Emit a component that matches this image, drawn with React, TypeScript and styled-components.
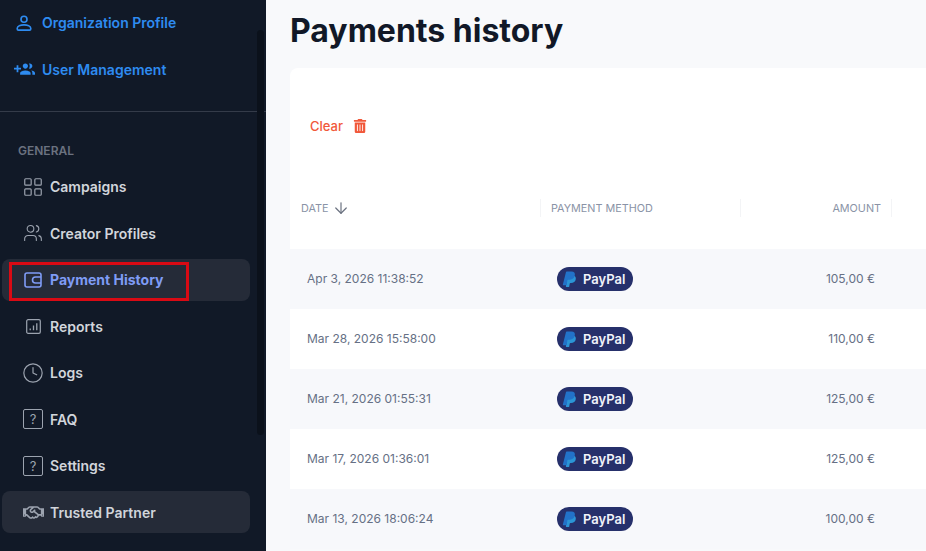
import type { ReactNode } from "react";
import styled, { createGlobalStyle } from "styled-components";
import { ArrowDown, Clock, LayoutGrid, Users } from "lucide-react";
import { FaRegHandshake, FaTrashAlt } from "react-icons/fa";

type NavTone = "default" | "active" | "partner";

interface NavEntry {
  label: string;
  icon: ReactNode;
  tone?: NavTone;
}

interface Payment {
  date: string;
  amount: string;
}

const ProfileIcon = () => (
  <svg width="18" height="18" viewBox="0 0 24 24" fill="none" stroke="currentColor" strokeWidth="2.2">
    <circle cx="12" cy="7" r="4" />
    <path d="M3 20v-1c0-2.8 4.5-4.5 9-4.5s9 1.7 9 4.5v1a1.5 1.5 0 0 1-1.5 1.5h-15A1.5 1.5 0 0 1 3 20z" />
  </svg>
);

const GroupAddIcon = () => (
  <svg width="21" height="21" viewBox="0 0 24 24" fill="currentColor">
    <path d="M8 10H5V7H3v3H0v2h3v3h2v-3h3v-2zm10 1c1.66 0 2.99-1.34 2.99-3S19.66 5 18 5c-.32 0-.63.05-.91.14.57.81.9 1.79.9 2.86s-.34 2.04-.9 2.86c.28.09.59.14.91.14zm-5 0c1.66 0 2.99-1.34 2.99-3S14.66 5 13 5s-3 1.34-3 3 1.34 3 3 3zm6.62 2.16c.83.73 1.38 1.66 1.38 2.84v2h3v-2c0-1.54-2.37-2.49-4.38-2.84zM13 13c-2 0-6 1-6 3v2h12v-2c0-2-4-3-6-3z" />
  </svg>
);

const WalletIcon = () => (
  <svg width="18" height="16" viewBox="0 0 18 16" fill="none" stroke="currentColor" strokeWidth="1.6">
    <rect x="1" y="1" width="16" height="14" rx="2" />
    <path d="M17 5h-5.5a3 3 0 0 0 0 6H17" />
  </svg>
);

const ReportsIcon = () => (
  <svg width="15" height="15" viewBox="0 0 16 16" fill="none" stroke="currentColor">
    <rect x="0.75" y="0.75" width="14.5" height="14.5" rx="1.5" strokeWidth="1.3" />
    <path d="M4.5 12v-2M8 12V7M11.5 12V4.5" strokeWidth="1.4" />
  </svg>
);

const HelpIcon = () => <QuestionBox>?</QuestionBox>;

const PayPalIcon = () => (
  <svg width="15" height="17" viewBox="0 0 24 26">
    <path
      fill="#2b95d6"
      d="M20 7.5c1.6 1 2.4 2.7 2 5-.7 4-3.6 6-7.6 6h-1c-.5 0-.9.3-1 .8l-.9 5.2c-.1.3-.3.5-.6.5H6.8c-.4 0-.6-.3-.6-.7L9 7.5z"
    />
    <path
      fill="#2272c9"
      d="M7.5 0h7.8c3.8 0 6.1 2 5.2 6.3-.8 4.7-3.9 7-8 7H9.6c-.5 0-.9.3-1 .8l-1.2 7.4c-.1.3-.3.5-.6.5H1.9c-.4 0-.6-.3-.6-.7L6.4.9C6.5.4 7 0 7.5 0z"
    />
  </svg>
);

const topEntries: NavEntry[] = [
  { label: "Organization Profile", icon: <ProfileIcon /> },
  { label: "User Management", icon: <GroupAddIcon /> },
];

const generalEntries: NavEntry[] = [
  { label: "Campaigns", icon: <LayoutGrid size={22} strokeWidth={1.3} /> },
  { label: "Creator Profiles", icon: <Users size={20} strokeWidth={1.3} /> },
  { label: "Payment History", icon: <WalletIcon />, tone: "active" },
  { label: "Reports", icon: <ReportsIcon /> },
  { label: "Logs", icon: <Clock size={22} strokeWidth={1.3} /> },
  { label: "FAQ", icon: <HelpIcon /> },
  { label: "Settings", icon: <HelpIcon /> },
  { label: "Trusted Partner", icon: <FaRegHandshake size={21} />, tone: "partner" },
];

const payments: Payment[] = [
  { date: "Apr 3, 2026 11:38:52", amount: "105,00 €" },
  { date: "Mar 28, 2026 15:58:00", amount: "110,00 €" },
  { date: "Mar 21, 2026 01:55:31", amount: "125,00 €" },
  { date: "Mar 17, 2026 01:36:01", amount: "125,00 €" },
  { date: "Mar 13, 2026 18:06:24", amount: "100,00 €" },
];

export default function App() {
  return (
    <>
      <GlobalStyle />
      <Page>
        <Sidebar>
          <TopNav>
            {topEntries.map((entry) => (
              <TopItem key={entry.label}>
                <TopIcon>{entry.icon}</TopIcon>
                {entry.label}
              </TopItem>
            ))}
          </TopNav>
          <Divider />
          <SectionLabel>GENERAL</SectionLabel>
          <GeneralNav>
            {generalEntries.map((entry) => (
              <NavItem key={entry.label} $tone={entry.tone ?? "default"}>
                <NavIcon $active={entry.tone === "active"}>{entry.icon}</NavIcon>
                {entry.label}
                {entry.tone === "active" && <Highlight />}
              </NavItem>
            ))}
          </GeneralNav>
          <ScrollThumb />
        </Sidebar>
        <Main>
          <Title>Payments history</Title>
          <Card>
            <FilterBar>
              <ClearButton type="button">
                Clear
                <FaTrashAlt size={14} />
              </ClearButton>
            </FilterBar>
            <HeaderRow>
              <HeaderCell>
                DATE
                <ArrowDown size={18} strokeWidth={1.6} color="#6b7280" />
              </HeaderCell>
              <HeaderCell>PAYMENT METHOD</HeaderCell>
              <AmountHeader>AMOUNT</AmountHeader>
            </HeaderRow>
            {payments.map((payment, index) => (
              <Row key={payment.date} $striped={index % 2 === 0}>
                <DateCell>{payment.date}</DateCell>
                <MethodCell>
                  <PayPalPill>
                    <PayPalIcon />
                    PayPal
                  </PayPalPill>
                </MethodCell>
                <AmountCell>{payment.amount}</AmountCell>
              </Row>
            ))}
          </Card>
        </Main>
      </Page>
    </>
  );
}

const GlobalStyle = createGlobalStyle`
  * {
    box-sizing: border-box;
  }

  html,
  body {
    margin: 0;
    height: 100%;
    overflow: hidden;
    font-family: Inter, "Liberation Sans", sans-serif;
  }
`;

const Page = styled.div`
  display: flex;
  width: 926px;
  height: 551px;
  overflow: hidden;
  background-color: #f8f9fb;
`;

const Sidebar = styled.aside`
  position: relative;
  flex: 0 0 266px;
  background-color: #111927;
  padding-top: 1px;
`;

const TopNav = styled.nav`
  display: flex;
  flex-direction: column;
  gap: 3.5px;
  height: 110px;
`;

const TopItem = styled.div`
  display: flex;
  align-items: center;
  height: 43px;
  color: #2e8bf0;
  font-size: 14px;
  font-weight: 600;
`;

const TopIcon = styled.span`
  display: flex;
  justify-content: center;
  align-items: center;
  width: 24px;
  margin: 0 6px 0 12px;
`;

const Divider = styled.div`
  height: 1px;
  background-color: #343b49;
`;

const SectionLabel = styled.div`
  margin: 32px 0 0 18px;
  height: 14px;
  line-height: 14px;
  color: #6b7280;
  font-size: 12px;
  font-weight: 600;
`;

const GeneralNav = styled.nav`
  display: flex;
  flex-direction: column;
  gap: 4.5px;
  margin: 7.5px 0 0 2px;
  width: 248px;
`;

const NavItem = styled.div<{ $tone: NavTone }>`
  position: relative;
  display: flex;
  align-items: center;
  height: 42px;
  border-radius: 8px;
  background-color: ${({ $tone }) => ($tone === "default" ? "transparent" : "#252b38")};
  color: ${({ $tone }) => ($tone === "active" ? "#7f9cf5" : "#d1d5db")};
  font-size: 14px;
  font-weight: ${({ $tone }) => ($tone === "active" ? 700 : 600)};
`;

const NavIcon = styled.span<{ $active: boolean }>`
  display: flex;
  justify-content: center;
  align-items: center;
  width: 22px;
  margin: 0 6px 0 20px;
  color: ${({ $active }) => ($active ? "#7f9cf5" : "#9ca3af")};
`;

const QuestionBox = styled.span`
  display: flex;
  justify-content: center;
  align-items: center;
  width: 20px;
  height: 20px;
  border: 1px solid #9ca3af;
  border-radius: 2px;
  color: #9ca3af;
  font-size: 13px;
  font-weight: 400;
`;

const Highlight = styled.span`
  position: absolute;
  top: 3px;
  left: 7px;
  width: 180px;
  height: 39px;
  border: 3px solid #d90a14;
`;

const ScrollThumb = styled.span`
  position: absolute;
  top: 30px;
  left: 257px;
  width: 7px;
  height: 405px;
  border-radius: 4px;
  background-color: #0b111b;
`;

const Main = styled.main`
  flex: 1;
  min-width: 0;
  padding-left: 24px;
`;

const Title = styled.h1`
  margin: 11px 0 0;
  height: 39px;
  line-height: 39px;
  color: #111827;
  font-size: 32px;
  font-weight: 700;
`;

const Card = styled.section`
  width: 760px;
  margin-top: 18px;
  border-radius: 8px 0 0 0;
  background-color: #ffffff;
`;

const FilterBar = styled.div`
  display: flex;
  align-items: center;
  height: 116px;
  padding-left: 20px;
`;

const ClearButton = styled.button`
  display: flex;
  align-items: center;
  gap: 10px;
  padding: 0;
  border: none;
  background: none;
  color: #f1583a;
  font-family: inherit;
  font-size: 13px;
  font-weight: 500;
`;

const columns = "250px 200px 152px 1fr";

const HeaderRow = styled.div`
  display: grid;
  grid-template-columns: ${columns};
  align-items: center;
  height: 65px;
  padding-bottom: 17px;
`;

const HeaderCell = styled.div`
  display: flex;
  align-items: center;
  gap: 4px;
  height: 18px;
  padding-left: 11px;
  color: #8a93a6;
  font-size: 10.8px;
  font-weight: 400;

  & + & {
    border-left: 1px solid #f3f4f6;
    padding-left: 10px;
  }
`;

const AmountHeader = styled(HeaderCell)`
  justify-content: flex-end;
  padding-right: 10px;
  border-right: 1px solid #f3f4f6;
`;

const Row = styled.div<{ $striped: boolean }>`
  display: grid;
  grid-template-columns: ${columns};
  align-items: center;
  height: 60px;
  background-color: ${({ $striped }) => ($striped ? "#f7f8fb" : "#ffffff")};
  color: #667085;
  font-size: 12px;
`;

const DateCell = styled.div`
  padding: 0 0 2px 17px;
`;

const MethodCell = styled.div`
  padding-left: 17px;
`;

const AmountCell = styled.div`
  padding: 0 17px 2px 0;
  text-align: right;
`;

const PayPalPill = styled.span`
  display: inline-flex;
  align-items: center;
  gap: 6px;
  width: 76px;
  height: 24px;
  padding-left: 5px;
  border-radius: 12px;
  background-color: #26306b;
  color: #f1f3fa;
  font-size: 13px;
  font-weight: 600;
`;
